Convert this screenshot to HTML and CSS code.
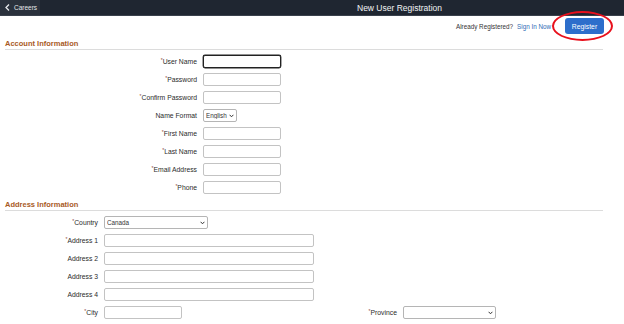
FILE: index.html
```html
<!DOCTYPE html>
<html lang="en">
<head>
    <meta charset="UTF-8">
    <meta name="viewport" content="width=device-width, initial-scale=1.0">
    <title>New User Registration</title>
    <link rel="stylesheet" href="styles.css">
</head>
<body>
    <div class="banner">
        <a class="back" href="#">
            <svg width="5" height="7" viewBox="0 0 5 7"><path d="M4 0.5 L1 3.5 L4 6.5" fill="none" stroke="#e6e8eb" stroke-width="1.3"/></svg>
            Careers
        </a>
        <div class="title">New User Registration</div>
    </div>

    <div class="toolbar">
        <span class="already">Already Registered?</span>
        <a class="signin" href="#">Sign In Now</a>
        <div class="btn-wrap">
            <button class="register">Register</button>
            <span class="circle"></span>
        </div>
    </div>

    <div class="section">
        <h2>Account Information</h2>
        <div class="rows account">
            <div class="row"><label><span class="req">*</span>User Name</label><input type="text" class="focus"></div>
            <div class="row"><label><span class="req">*</span>Password</label><input type="password"></div>
            <div class="row"><label><span class="req">*</span>Confirm Password</label><input type="password"></div>
            <div class="row"><label>Name Format</label>
                <span class="sel fmt"><select><option>English</option></select><svg class="chev" width="5" height="4" viewBox="0 0 5 4"><path d="M0.6 0.8 L2.5 2.8 L4.4 0.8" fill="none" stroke="#333" stroke-width="1"/></svg></span>
            </div>
            <div class="row"><label><span class="req">*</span>First Name</label><input type="text"></div>
            <div class="row"><label><span class="req">*</span>Last Name</label><input type="text"></div>
            <div class="row"><label><span class="req">*</span>Email Address</label><input type="text"></div>
            <div class="row"><label><span class="req">*</span>Phone</label><input type="text"></div>
        </div>
    </div>

    <div class="section">
        <h2>Address Information</h2>
        <div class="rows address">
            <div class="row"><label><span class="req">*</span>Country</label>
                <span class="sel country"><select><option>Canada</option></select><svg class="chev" width="5" height="4" viewBox="0 0 5 4"><path d="M0.6 0.8 L2.5 2.8 L4.4 0.8" fill="none" stroke="#333" stroke-width="1"/></svg></span>
            </div>
            <div class="row"><label><span class="req">*</span>Address 1</label><input type="text" class="wide"></div>
            <div class="row"><label>Address 2</label><input type="text" class="wide"></div>
            <div class="row"><label>Address 3</label><input type="text" class="wide"></div>
            <div class="row"><label>Address 4</label><input type="text" class="wide"></div>
            <div class="row"><label><span class="req">*</span>City</label><input type="text">
                <label class="prov-label"><span class="req">*</span>Province</label>
                <span class="sel province"><select><option></option></select><svg class="chev" width="5" height="4" viewBox="0 0 5 4"><path d="M0.6 0.8 L2.5 2.8 L4.4 0.8" fill="none" stroke="#333" stroke-width="1"/></svg></span>
            </div>
            <div class="row"><label></label><input type="text"></div>
        </div>
    </div>
</body>
</html>
```

FILE: styles.css
```css
body {
    font-family: "Liberation Sans", Arial, sans-serif;
    font-size: 7px;
    color: #333;
    margin: 0;
    background: #fff;
}

.banner {
    display: flex;
    align-items: center;
    height: 15px;
    background: #1f2631;
    border-bottom: 1px solid #3a414c;
}

.back {
    display: flex;
    align-items: center;
    gap: 4px;
    height: 100%;
    width: 40px;
    box-sizing: border-box;
    padding-left: 5px;
    background: #2a313c;
    color: #e6e8eb;
    text-decoration: none;
    font-size: 6.5px;
}

.title {
    margin-left: 317px;
    color: #f2f3f5;
    font-size: 8.5px;
}

.toolbar {
    display: flex;
    align-items: center;
    justify-content: flex-end;
    height: 16px;
    padding: 2px 20px 5px 0;
    font-size: 6.3px;
}

.already {
    color: #333;
}

.signin {
    margin-left: 4px;
    color: #2f6db5;
    text-decoration: none;
}

.btn-wrap {
    position: relative;
    margin-left: 14px;
}

.register {
    display: block;
    width: 39px;
    height: 16px;
    padding: 0;
    border: none;
    border-radius: 3px;
    background: #2d6ecb;
    color: #fff;
    font-family: inherit;
    font-size: 6.8px;
}

.circle {
    position: absolute;
    left: -13px;
    top: -7px;
    width: 61px;
    height: 30px;
    box-sizing: border-box;
    border: 2.5px solid #e8101c;
    border-radius: 50%;
}

.section {
    margin: 0 21px 0 5px;
}

h2 {
    margin: 0;
    height: 10px;
    line-height: 10px;
    font-size: 7.5px;
    font-weight: bold;
    color: #a85a1e;
    border-bottom: 1px solid #dcdcdc;
}

.rows {
    padding: 2px 0 4px;
}

.row {
    display: flex;
    align-items: center;
    height: 18px;
}

.row label {
    text-align: right;
    padding-right: 6px;
    box-sizing: border-box;
    font-size: 6.8px;
    color: #2b2b2b;
}

.account label {
    width: 198px;
}

.address label {
    width: 99px;
}

.address .prov-label {
    width: 221px;
}

.req {
    font-size: 5px;
    vertical-align: 2px;
    color: #8a4a3a;
}

input {
    width: 78px;
    height: 13px;
    box-sizing: border-box;
    border: 1px solid #c3c3c3;
    border-radius: 2px;
    padding: 0 3px;
    font-family: inherit;
    font-size: 7px;
    margin: 0;
}

input.focus {
    border: 1px solid #222;
    box-shadow: 0 0 0 0.4px #222;
}

input.wide {
    width: 210px;
}

.sel {
    position: relative;
    display: inline-flex;
}

.sel select {
    appearance: none;
    width: 100%;
    height: 13px;
    box-sizing: border-box;
    border: 1px solid #b5b5b5;
    border-radius: 2px;
    padding: 0 2px;
    font-family: inherit;
    font-size: 6.3px;
    color: #333;
    background: #fff;
    margin: 0;
}

.chev {
    position: absolute;
    right: 3px;
    top: 5px;
    pointer-events: none;
}

.fmt {
    width: 34px;
}

.country {
    width: 104px;
}

.province {
    width: 93px;
}
```
